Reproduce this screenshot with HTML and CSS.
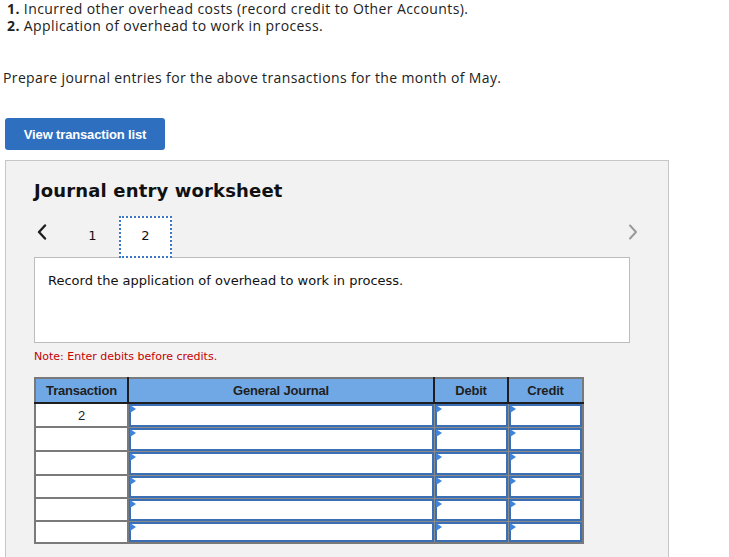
FILE: index.html
```html
<!DOCTYPE html>
<html>
<head>
<meta charset="utf-8">
<link rel="stylesheet" href="styles.css">
</head>
<body>
<div class="page">
  <ol class="steps">
    <li><b>1.</b> Incurred other overhead costs (record credit to Other Accounts).</li>
    <li><b>2.</b> Application of overhead to work in process.</li>
  </ol>
  <p class="prompt">Prepare journal entries for the above transactions for the month of May.</p>
  <button class="btn" type="button">View transaction list</button>

  <section class="panel">
    <h2 class="title">Journal entry worksheet</h2>
    <div class="tabs">
      <span class="chev chev-left">
        <svg width="12" height="16" viewBox="0 0 12 16"><polyline points="9,1.5 3,8 9,14.5" fill="none" stroke="#1e1e1e" stroke-width="2.4" stroke-linecap="round" stroke-linejoin="round"/></svg>
      </span>
      <span class="tab">1</span>
      <span class="tab tab-active">2</span>
      <span class="spacer"></span>
      <span class="chev chev-right">
        <svg width="12" height="16" viewBox="0 0 12 16"><polyline points="3,1.5 9,8 3,14.5" fill="none" stroke="#9a9a9a" stroke-width="2" stroke-linecap="round" stroke-linejoin="round"/></svg>
      </span>
    </div>
    <div class="desc">Record the application of overhead to work in process.</div>
    <p class="note">Note: Enter debits before credits.</p>

    <table class="journal">
      <thead>
        <tr>
          <th class="c-tr">Transaction</th>
          <th class="c-gj">General Journal</th>
          <th class="c-dr">Debit</th>
          <th class="c-cr">Credit</th>
        </tr>
      </thead>
      <tbody>
        <tr class="r24"><td class="tr">2</td><td class="in"><div class="box"></div></td><td class="in"><div class="box"></div></td><td class="in"><div class="box"></div></td></tr>
        <tr class="r24"><td class="tr"></td><td class="in"><div class="box"></div></td><td class="in"><div class="box"></div></td><td class="in"><div class="box"></div></td></tr>
        <tr class="r24"><td class="tr"></td><td class="in"><div class="box"></div></td><td class="in"><div class="box"></div></td><td class="in"><div class="box"></div></td></tr>
        <tr class="r23"><td class="tr"></td><td class="in"><div class="box"></div></td><td class="in"><div class="box"></div></td><td class="in"><div class="box"></div></td></tr>
        <tr class="r23"><td class="tr"></td><td class="in"><div class="box"></div></td><td class="in"><div class="box"></div></td><td class="in"><div class="box"></div></td></tr>
        <tr class="r22"><td class="tr"></td><td class="in"><div class="box"></div></td><td class="in"><div class="box"></div></td><td class="in"><div class="box"></div></td></tr>
      </tbody>
    </table>
  </section>
</div>
</body>
</html>
```

FILE: styles.css
```css
* { box-sizing: border-box; }
html, body { margin: 0; padding: 0; background: #fff; }
body { font-family: "Open Sans", Lato, sans-serif; color: #222; }

.page { padding: 0 0 0 5px; }

.steps {
  list-style: none;
  margin: 0;
  padding: 0 0 0 2px;
  font-size: 14px;
  line-height: 17px;
  letter-spacing: 0.4px;
}
.steps b { font-weight: 700; }

.prompt {
  margin: 35px 0 0 -2px;
  font-size: 14px;
  line-height: 17px;
  letter-spacing: 0.37px;
}

.btn {
  display: block;
  margin: 32px 0 0 0;
  width: 160px;
  height: 32px;
  border: 0;
  border-radius: 3px;
  background: #2f6fbf;
  color: #fff;
  font-family: "Liberation Sans", Arial, sans-serif;
  font-weight: 700;
  font-size: 13px;
  letter-spacing: -0.15px;
  padding: 0;
}

.panel {
  margin-top: 10px;
  width: 664px;
  min-height: 420px;
  background: #f2f2f2;
  border: 1px solid #c6c6c6;
  padding: 20px 28px 20px 28px;
}

.title {
  margin: 0;
  font-family: "DejaVu Sans", Verdana, sans-serif;
  font-weight: 700;
  font-size: 18px;
  letter-spacing: 0.15px;
  line-height: 20px;
  color: #111;
}

.tabs {
  margin-top: 15px;
  display: flex;
  height: 42px;
  align-items: flex-start;
}
.chev { display: flex; align-items: center; height: 42px; }
.chev svg { display: block; }
.chev-left { width: 32px; padding-left: 2px; padding-bottom: 10px; }
.chev-right { padding-bottom: 10px; padding-right: 1px; }
.spacer { flex: 1; }

.tab {
  width: 53px;
  height: 42px;
  text-align: center;
  font-family: "DejaVu Sans", Verdana, sans-serif;
  font-size: 13px;
  line-height: 20px;
  padding-top: 8px;
  border: 2px solid transparent;
  color: #111;
}
.tab-active {
  background: #fff;
  border: 2px dotted #3b78c8;
  position: relative;
  z-index: 1;
}

.desc {
  margin-top: -1px;
  width: 596px;
  height: 86px;
  background: #fff;
  border: 1px solid #bcbcbc;
  padding: 14px 13px 0 13px;
  font-family: "DejaVu Sans", Verdana, sans-serif;
  font-size: 13px;
  line-height: 17px;
  color: #111;
}

.note {
  margin: 7px 0 0 0;
  font-family: "DejaVu Sans", Verdana, sans-serif;
  font-size: 11px;
  line-height: 14px;
  color: #c40000;
}

.journal {
  margin-top: 13px;
  border-collapse: collapse;
  table-layout: fixed;
  width: 548px;
  font-family: "Liberation Sans", Arial, sans-serif;
  font-size: 13px;
  border: 2px solid #7a7a7a;
}
.journal th {
  height: 25px;
  padding: 0;
  background: #70a8e6;
  color: #1f1f1f;
  font-weight: 700;
  letter-spacing: -0.2px;
  border-top: 2px solid #7a7a7a;
  border-bottom: 2px solid #1e1e1e;
  border-left: 2px solid #1e1e1e;
  border-right: 2px solid #1e1e1e;
}
.journal th.c-tr { border-left: 2px solid #7a7a7a; }
.journal th.c-cr { border-right: 2px solid #7a7a7a; }
.c-tr { width: 93px; }
.c-gj { width: 306px; }
.c-dr { width: 74px; }
.c-cr { width: 75px; }

.journal td {
  padding: 0;
  background: #fff;
  border: 2px solid #7a7a7a;
}
.r24 td { height: 24px; }
.r23 td { height: 23px; }
.r22 td { height: 22px; }
.journal td.tr { text-align: center; color: #222; }
.journal td.in { border-width: 1px; border-color: #8a8a8a; }

.box {
  position: relative;
  height: 100%;
  min-height: 20px;
  border: 2px solid #3a6fb6;
}
.box::before {
  content: "";
  position: absolute;
  left: -1px;
  top: -1px;
  width: 0;
  height: 0;
  border-left: 6px solid #3d84da;
  border-top: 4px solid transparent;
  border-bottom: 4px solid transparent;
}
```
